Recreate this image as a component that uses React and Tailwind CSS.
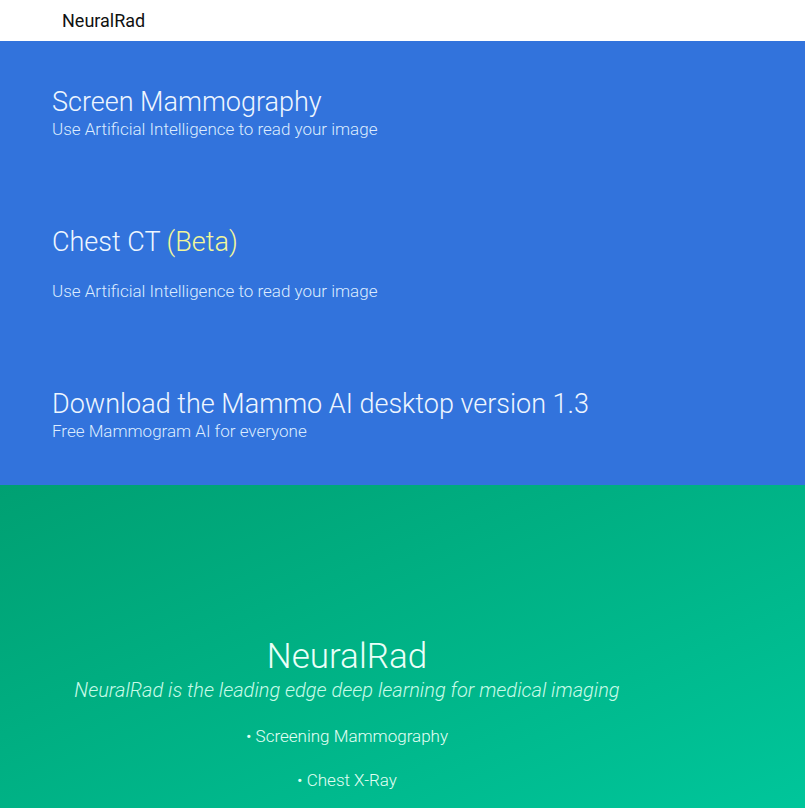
import React from 'react';

export default function App() {
  return (
    <div className="font-['Roboto','Liberation_Sans',sans-serif] w-[805px] min-h-[808px] overflow-hidden">
      <header className="h-[41px] bg-white flex items-center px-[62px]">
        <span className="text-[18px] font-normal text-[#111]">NeuralRad</span>
      </header>

      <section className="bg-[#3273dc] pt-[44px] pb-[44px] px-[52px]">
        <div className="flex flex-col gap-[86px]">
          <div>
            <h2 className="text-[27px] leading-[34px] font-light text-[#eef6ff]">Screen Mammography</h2>
            <p className="text-[17px] leading-[20px] font-light text-[#dcecff]">Use Artificial Intelligence to read your image</p>
          </div>
          <div>
            <h2 className="text-[27px] leading-[34px] font-light text-[#eef6ff]">
              Chest CT <span className="text-[#f2f79a]">(Beta)</span>
            </h2>
            <p className="mt-[22px] text-[17px] leading-[20px] font-light text-[#dcecff]">Use Artificial Intelligence to read your image</p>
          </div>
          <div>
            <h2 className="text-[27px] leading-[34px] font-light text-[#eef6ff]">Download the Mammo AI desktop version 1.3</h2>
            <p className="text-[17px] leading-[20px] font-light text-[#dcecff]">Free Mammogram AI for everyone</p>
          </div>
        </div>
      </section>

      <section className="bg-gradient-to-br from-[#00a072] to-[#00c79c] pt-[152px] pb-[40px] min-h-[323px]">
        <div className="w-[694px] text-center">
          <h1 className="text-[35px] leading-[40px] font-light text-[#eafff8]">NeuralRad</h1>
          <p className="text-[20px] leading-[26px] font-light italic text-[#c8fbe8]">NeuralRad is the leading edge deep learning for medical imaging</p>
          <ul className="mt-[21px] flex flex-col gap-[20px] text-[17px] leading-[24px] font-light text-[#e2fff4]">
            <li>• Screening Mammography</li>
            <li>• Chest X-Ray</li>
          </ul>
        </div>
      </section>
    </div>
  );
}
